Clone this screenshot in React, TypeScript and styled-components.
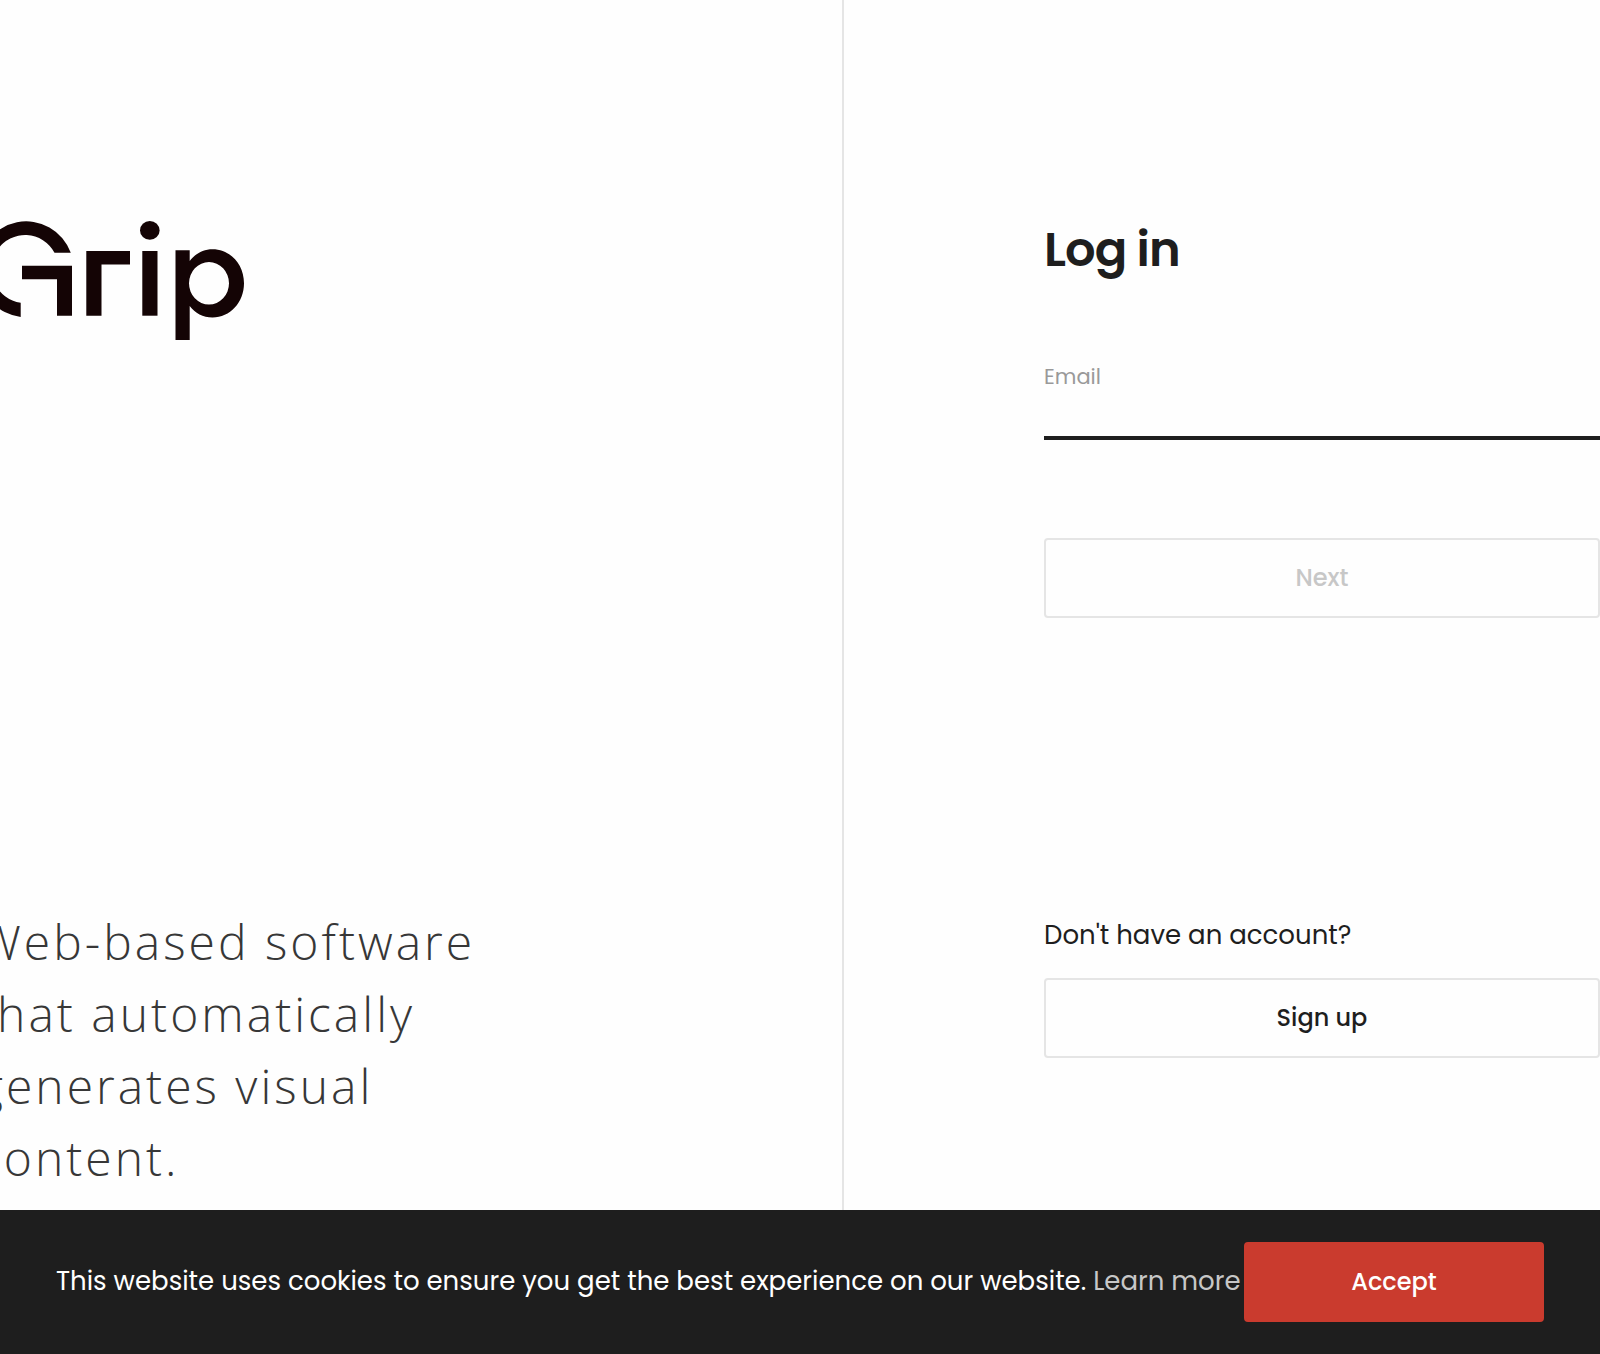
import React, { useState } from "react";
import styled, { createGlobalStyle } from "styled-components";

const ink = "#1e1e1e";
const line = "#e5e5e5";

const GlobalStyle = createGlobalStyle`
  *, *::before, *::after { box-sizing: border-box; }
  body {
    margin: 0;
    overflow-x: hidden;
    background: #fefefe;
    color: ${ink};
    font-family: Poppins, Inter, sans-serif;
    -webkit-font-smoothing: antialiased;
  }
`;

const Page = styled.div`
  display: flex;
  flex-direction: column;
  min-height: 100vh;
`;

const Columns = styled.main`
  flex: 1;
  display: grid;
  grid-template-columns: 211fr 189fr;
`;

const Intro = styled.section`
  display: flex;
  flex-direction: column;
  justify-content: space-between;
  padding: 221px 0 16px;
  border-right: 2px solid ${line};
`;

const Logo = styled.svg`
  display: block;
  width: 265px;
  height: 119px;
  margin-left: -21px;
  fill: #140405;
`;

const Tagline = styled.p`
  width: 520px;
  margin: 0 0 0 -22px;
  color: #373737;
  font: 300 48px/72px "Open Sans", sans-serif;
  letter-spacing: 3px;
`;

const Account = styled.section`
  padding: 214px 0 0 200px;
`;

const Form = styled.form`
  display: flex;
  flex-direction: column;
`;

const Title = styled.h1`
  margin: 0 0 75px;
  font-size: 48px;
  font-weight: 600;
  line-height: 72px;
  letter-spacing: -1px;
`;

const Label = styled.label`
  color: #999;
  font-size: 21px;
  line-height: 32px;
`;

const TextInput = styled.input`
  height: 47px;
  margin-bottom: 98px;
  padding: 0;
  border: 0;
  border-bottom: 4px solid ${ink};
  border-radius: 0;
  outline: none;
  background: transparent;
  color: ${ink};
  font: inherit;
  font-size: 24px;
`;

const Button = styled.button<{ $primary?: boolean }>`
  width: ${(p) => (p.$primary ? "300px" : "100%")};
  height: 80px;
  flex-shrink: 0;
  padding: 0 0 2px;
  border: 2px solid ${(p) => (p.$primary ? "#ca3b2e" : line)};
  border-radius: 4px;
  background: ${(p) => (p.$primary ? "#ca3b2e" : "transparent")};
  color: ${(p) => (p.$primary ? "#fff" : ink)};
  font: inherit;
  font-size: 24px;
  font-weight: 500;
  cursor: pointer;

  &:disabled {
    color: #c7c7c7;
    cursor: default;
  }
`;

const SignUp = styled.div`
  margin-top: 297px;
`;

const Question = styled.p`
  margin: 0 0 23px;
  font-size: 26px;
  line-height: 40px;
`;

const CookieBar = styled.footer`
  display: flex;
  align-items: center;
  justify-content: space-between;
  padding: 32px 56px;
  background: ${ink};
  color: #fff;
`;

const CookieText = styled.p`
  margin: 0;
  padding-bottom: 2px;
  font-size: 26px;
  line-height: 40px;
`;

const CookieLink = styled.a`
  color: #c7c7c7;
  text-decoration: none;
`;

function GripLogo() {
  return (
    <Logo viewBox="-21 221 265 119" role="img" aria-label="Grip">
      <path d="M70.800 252.700A47.500 48 0 1 0 20.700 317V302.700A33.500 34 0 1 1 54.500 252.700Z" />
      <path d="M22 265.700H72V315.700H57V279.300H22Z" />
      <path d="M86.300 251H130V264.500H101.500V315.700H86.300Z" />
      <rect x="142.300" y="251" width="15.200" height="64.700" />
      <ellipse cx="149.800" cy="230.400" rx="9.800" ry="9.400" />
      <path
        fillRule="evenodd"
        d="M175.500 250.300H189.700V261C195 254 203 249.200 212.500 249.200C230 249.200 244 264 244 283.300C244 302.500 230 317.500 212.500 317.500C203 317.500 195 313 189.700 306V340H175.500Z M189 283.300A20 21.200 0 1 0 229 283.300A20 21.200 0 1 0 189 283.300Z"
      />
    </Logo>
  );
}

export default function App() {
  const [email, setEmail] = useState("");

  return (
    <>
      <GlobalStyle />
      <Page>
        <Columns>
          <Intro>
            <GripLogo />
            <Tagline>
              Web-based software that automatically generates visual content.
            </Tagline>
          </Intro>
          <Account>
            <Form onSubmit={(e) => e.preventDefault()}>
              <Title>Log in</Title>
              <Label htmlFor="email">Email</Label>
              <TextInput
                id="email"
                type="email"
                value={email}
                onChange={(e) => setEmail(e.target.value)}
              />
              <Button type="submit" disabled={!email}>
                Next
              </Button>
            </Form>
            <SignUp>
              <Question>Don't have an account?</Question>
              <Button type="button">Sign up</Button>
            </SignUp>
          </Account>
        </Columns>
        <CookieBar>
          <CookieText>
            This website uses cookies to ensure you get the best experience on
            our website. <CookieLink href="#cookies">Learn more</CookieLink>
          </CookieText>
          <Button type="button" $primary>
            Accept
          </Button>
        </CookieBar>
      </Page>
    </>
  );
}
